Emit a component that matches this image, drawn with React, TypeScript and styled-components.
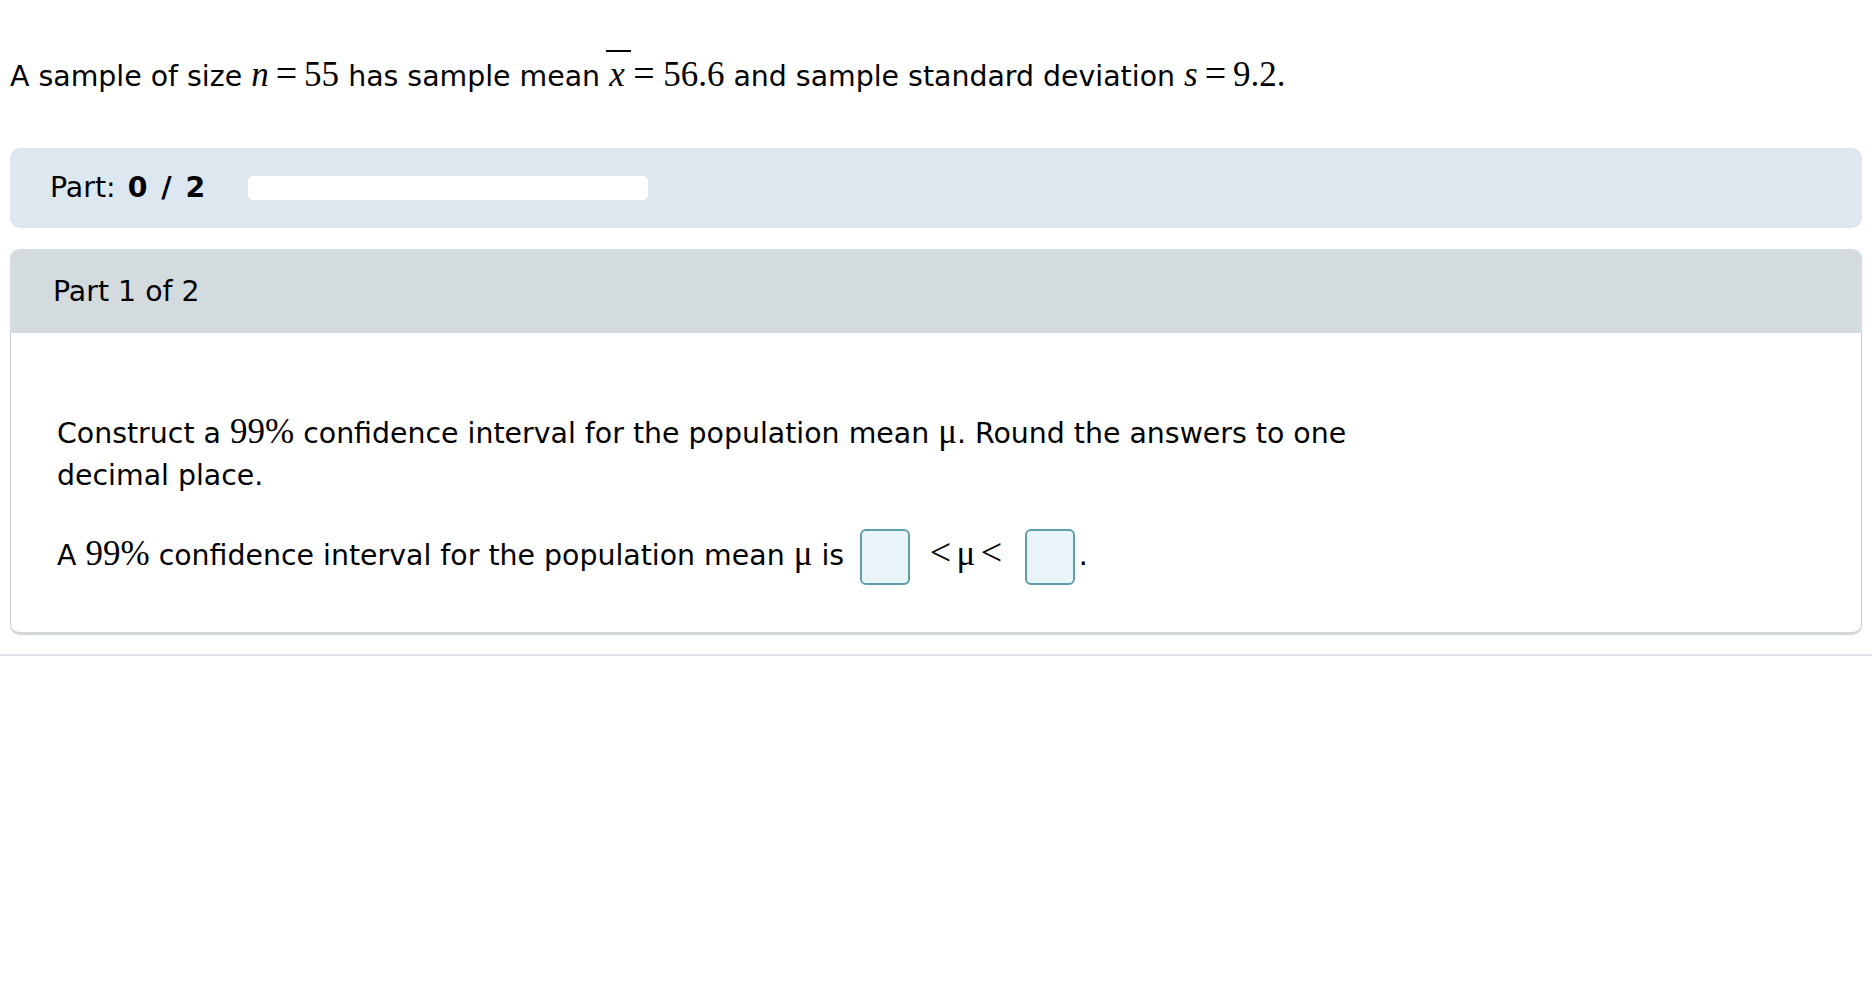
import styled, { createGlobalStyle } from 'styled-components';

const GlobalStyle = createGlobalStyle`
    html, body {
        margin: 0;
        padding: 0;
        background: #ffffff;
    }
    body {
        font-family: "DejaVu Sans", Verdana, sans-serif;
        font-size: 28.4px;
        color: #000000;
    }
`;

const Page = styled.div`
    padding: 0 10px;
`;

const Statement = styled.p`
    margin: 0;
    padding: 52px 0 0 0;
    line-height: 42px;
`;

const Math = styled.span`
    font-family: "Liberation Serif", "Times New Roman", serif;
    font-size: 35px;
    line-height: 42px;
    white-space: nowrap;
`;

const Var = styled.i`
    font-style: italic;
`;

// relation sign (=, <) drawn a little wider than the plain serif glyph
const Op = styled.span<{ $space?: number }>`
    font-size: 38px;
    line-height: 42px;
    margin: 0 ${props => props.$space ?? 7}px;
`;

const Bar = styled.span`
    position: relative;
    display: inline-block;

    &::before {
        content: '';
        position: absolute;
        left: -3px;
        right: -6px;
        top: -4px;
        height: 2px;
        background: #000000;
    }
`;

const PartBar = styled.div`
    margin-top: 50px;
    height: 80px;
    display: flex;
    align-items: center;
    gap: 42px;
    padding: 0 40px;
    background: #dde7f0;
    border-radius: 10px;
`;

const PartLabel = styled.span`
    line-height: 42px;

    b {
        font-weight: bold;
        letter-spacing: 1px;
        word-spacing: 2px;
        margin-left: 3px;
    }
`;

const Progress = styled.div`
    width: 400px;
    height: 24px;
    background: #ffffff;
    border-radius: 5px;
`;

const Card = styled.section`
    margin-top: 21px;
`;

const CardHeader = styled.div`
    height: 84px;
    display: flex;
    align-items: center;
    padding: 0 43px;
    background: #d3dbde;
    border-radius: 10px 10px 0 0;
`;

const CardBody = styled.div`
    padding: 78px 46px 47px 46px;
    border: 1px solid #c9d0d4;
    border-top: none;
    border-bottom: 3px solid #d0d8dc;
    border-radius: 0 0 10px 10px;
`;

const Para = styled.p`
    margin: 0;
    line-height: 42px;
    max-width: 1300px;

    & + & {
        margin-top: 32px;
    }
`;

const Answer = styled.span<{ $after?: boolean }>`
    display: inline-block;
    vertical-align: middle;
    width: 46px;
    height: 52px;
    margin: ${props => (props.$after ? '0 4px 0 0' : '0 0 0 16px')};
    background: #e9f4f9;
    border: 2px solid #5f9dad;
    border-radius: 6px;
`;

const Interval = styled(Math)`
    margin: 0 17px 0 14px;
`;

const Rule = styled.hr`
    margin: 19px 0 0 0;
    border: none;
    height: 2px;
    background: #dde3e8;
`;

const Mu = () => <Math>μ</Math>;

export default function App() {
    return (
        <>
            <GlobalStyle />
            <Page>
                <Statement>
                    A sample of size{' '}
                    <Math>
                        <Var>n</Var>
                        <Op>=</Op>55
                    </Math>{' '}
                    has sample mean{' '}
                    <Math>
                        <Bar>
                            <Var>x</Var>
                        </Bar>
                        <Op $space={8.5}>=</Op>56.6
                    </Math>{' '}
                    and sample standard deviation{' '}
                    <Math>
                        <Var>s</Var>
                        <Op>=</Op>9.2.
                    </Math>
                </Statement>

                <PartBar>
                    <PartLabel>
                        Part: <b>0 / 2</b>
                    </PartLabel>
                    <Progress />
                </PartBar>

                <Card>
                    <CardHeader>Part 1 of 2</CardHeader>
                    <CardBody>
                        <Para>
                            Construct a <Math>99%</Math> confidence interval for the population mean <Mu />. Round the
                            answers to one decimal place.
                        </Para>
                        <Para>
                            A <Math>99%</Math> confidence interval for the population mean <Mu /> is
                            <Answer />
                            <Interval>
                                <Op $space={5.5}>&lt;</Op>μ<Op $space={5.5}>&lt;</Op>
                            </Interval>
                            <Answer $after />.
                        </Para>
                    </CardBody>
                </Card>
            </Page>
            <Rule />
        </>
    );
}
